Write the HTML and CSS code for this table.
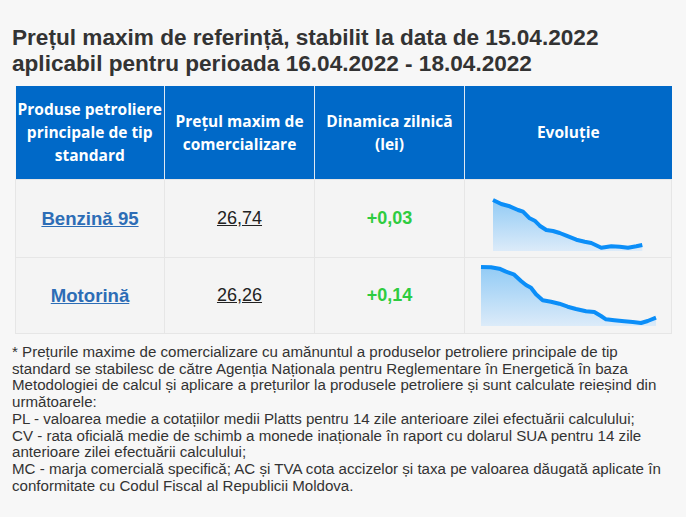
FILE: index.html
```html
<!DOCTYPE html>
<html lang="ro">
<head>
<meta charset="utf-8">
<link rel="stylesheet" href="styles.css">
</head>
<body>
<div class="page">
  <h1 class="title">Prețul maxim de referință, stabilit la data de 15.04.2022<br>aplicabil pentru perioada 16.04.2022 - 18.04.2022</h1>
  <table class="prices">
    <colgroup>
      <col class="c1"><col class="c2"><col class="c3"><col class="c4">
    </colgroup>
    <thead>
      <tr>
        <th>Produse petroliere principale de tip standard</th>
        <th>Prețul maxim de comercializare</th>
        <th>Dinamica zilnică (lei)</th>
        <th>Evoluție</th>
      </tr>
    </thead>
    <tbody>
      <tr class="r1">
        <td><a class="product" href="#">Benzină 95</a></td>
        <td><span class="price">26,74</span></td>
        <td><span class="delta">+0,03</span></td>
        <td class="chart-cell">
          <svg class="chart chart1" width="150" height="52" viewBox="0 0 150 52">
            <defs>
              <linearGradient id="g1" x1="0" y1="0" x2="0" y2="1">
                <stop offset="0" stop-color="#92cbf5"/>
                <stop offset="1" stop-color="#dcebf9"/>
              </linearGradient>
            </defs>
            <path d="M0,1 L8.3,5 L16.7,7.3 L25,11 L30,12.7 L36.7,19.3 L41.7,21.7 L46.7,26.7 L53.3,31 L60,32 L66.7,34 L73.3,36.7 L83.3,40.7 L91.7,42.7 L98.3,44 L108.3,48.7 L118.3,47.3 L126.7,47.7 L135,48.7 L143.3,47.3 L149.3,46 L149.3,52 L0,52 Z" fill="url(#g1)"/>
            <path d="M0,1 L8.3,5 L16.7,7.3 L25,11 L30,12.7 L36.7,19.3 L41.7,21.7 L46.7,26.7 L53.3,31 L60,32 L66.7,34 L73.3,36.7 L83.3,40.7 L91.7,42.7 L98.3,44 L108.3,48.7 L118.3,47.3 L126.7,47.7 L135,48.7 L143.3,47.3 L149.3,46" fill="none" stroke="#0b8ef8" stroke-width="4" stroke-linejoin="round"/>
          </svg>
        </td>
      </tr>
      <tr class="r2">
        <td><a class="product" href="#">Motorină</a></td>
        <td><span class="price">26,26</span></td>
        <td><span class="delta">+0,14</span></td>
        <td class="chart-cell">
          <svg class="chart chart2" width="175" height="61" viewBox="0 0 175 61">
            <defs>
              <linearGradient id="g2" x1="0" y1="0" x2="0" y2="1">
                <stop offset="0" stop-color="#92cbf5"/>
                <stop offset="1" stop-color="#dcebf9"/>
              </linearGradient>
            </defs>
            <path d="M0,2 L10,2.3 L18.3,3.7 L25,6.7 L32.7,9.3 L40,16 L45,20 L50,22.7 L55,29.3 L61.7,35.3 L70,36.7 L78.3,38.7 L86.7,41.7 L95,44 L105,46.3 L113.3,47 L120,51 L125,54.3 L133.3,55.3 L143.3,56.3 L151.7,57 L160,58 L166.7,56 L175,52.7 L175,61 L0,61 Z" fill="url(#g2)"/>
            <path d="M0,2 L10,2.3 L18.3,3.7 L25,6.7 L32.7,9.3 L40,16 L45,20 L50,22.7 L55,29.3 L61.7,35.3 L70,36.7 L78.3,38.7 L86.7,41.7 L95,44 L105,46.3 L113.3,47 L120,51 L125,54.3 L133.3,55.3 L143.3,56.3 L151.7,57 L160,58 L166.7,56 L175,52.7" fill="none" stroke="#0b8ef8" stroke-width="4" stroke-linejoin="round"/>
          </svg>
        </td>
      </tr>
    </tbody>
  </table>
  <p class="note">* Prețurile maxime de comercializare cu amănuntul a produselor petroliere principale de tip standard se stabilesc de către Agenția Naționala pentru Reglementare în Energetică în baza Metodologiei de calcul și aplicare a prețurilor la produsele petroliere și sunt calculate reieșind din următoarele:<br>PL - valoarea medie a cotațiilor medii Platts pentru 14 zile anterioare zilei efectuării calculului;<br>CV - rata oficială medie de schimb a monede inaționale în raport cu dolarul SUA pentru 14 zile anterioare zilei efectuării calculului;<br>MC - marja comercială specifică; AC și TVA cota accizelor și taxa pe valoarea dăugată aplicate în conformitate cu Codul Fiscal al Republicii Moldova.</p>
</div>
</body>
</html>
```

FILE: styles.css
```css
html, body {
  margin: 0;
  padding: 0;
  background: #f7f7f7;
}
.page {
  padding: 25px 0 0 12px;
  width: 664px;
  font-family: "Liberation Sans", Arial, sans-serif;
  color: #333;
}
.title {
  margin: 0;
  font-size: 22.6px;
  line-height: 26px;
  font-weight: bold;
  color: #333;
}
.prices {
  margin: 9px 0 0 3px;
  width: 656px;
  border-collapse: collapse;
  table-layout: fixed;
  background: #f4f4f4;
}
.c1 { width: 149px; }
.c2 { width: 150px; }
.c3 { width: 150px; }
.c4 { width: 207px; }
.prices th {
  background: #0069c8;
  color: #fff;
  font-family: "Open Sans", sans-serif;
  font-weight: bold;
  font-size: 15.5px;
  line-height: 23px;
  height: 93px;
  padding: 0 1px;
  border-left: 1px solid #dfe8f2;
  text-align: center;
  vertical-align: middle;
}
.prices th:first-child { border-left: none; }
.prices td {
  border: 1px solid #e6e6e6;
  text-align: center;
  vertical-align: middle;
  padding: 0;
}
.r1 td { height: 77px; }
.r2 td { height: 75px; }
.product {
  font-size: 18.6px;
  font-weight: bold;
  color: #2d6db6;
  text-decoration: underline;
}
.price {
  font-size: 18px;
  color: #222;
  text-decoration: underline;
}
.delta {
  font-size: 18px;
  font-weight: bold;
  color: #2ecc40;
}
.chart { display: block; margin: 0 auto; overflow: visible; }
.chart1 { margin-top: 12px; }
.note {
  margin: 10px 0 0 0;
  font-size: 15.1px;
  line-height: 16.7px;
  color: #333;
}
```
